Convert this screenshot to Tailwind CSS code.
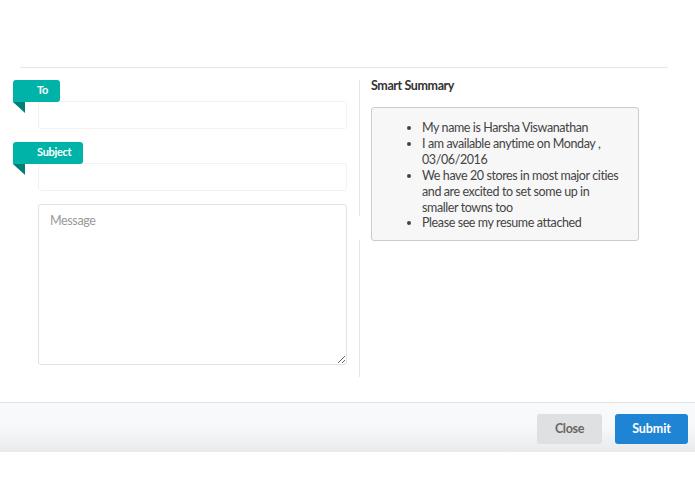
<!DOCTYPE html>
<html lang="en">
<head>
    <meta charset="UTF-8">
    <title>Smart Summary</title>
    <script src="https://cdn.jsdelivr.net/npm/@tailwindcss/browser@4"></script>
</head>
<body class="bg-white h-[494px] overflow-hidden font-['Lato',sans-serif] text-[#333]">
    <div class="pt-[67px] pl-5 pr-[27px]">
        <div class="h-px bg-[#e6e6e6]"></div>
    </div>

    <div class="flex h-[334px] pt-3 pl-[13px]">
        <!-- left: form -->
        <div class="w-[334px] h-[297px]">
            <div class="relative pt-[21px] pl-[25px]">
                <div class="absolute left-0 top-0 w-[47px] h-[22px] bg-[#00b3a8] rounded-r-[3px] rounded-tl-[3px] text-white text-[11px] tracking-[-0.3px] font-bold leading-[20px] pl-[24px]">To</div>
                <div class="absolute left-0 top-[22px] w-0 h-0 border-t-[11px] border-t-[#007f78] border-l-[12px] border-l-transparent"></div>
                <input type="text" class="block w-full h-[28px] border border-[#f2f2f2] rounded-[3px] bg-white">
            </div>
            <div class="relative mt-[13px] pt-[21px] pl-[25px]">
                <div class="absolute left-0 top-0 w-[70px] h-[22px] bg-[#00b3a8] rounded-r-[3px] rounded-tl-[3px] text-white text-[11px] tracking-[-0.3px] font-bold leading-[20px] pl-[24px]">Subject</div>
                <div class="absolute left-0 top-[22px] w-0 h-0 border-t-[11px] border-t-[#007f78] border-l-[12px] border-l-transparent"></div>
                <input type="text" class="block w-full h-[28px] border border-[#f2f2f2] rounded-[3px] bg-white">
            </div>
            <div class="mt-[13px] pl-[25px]">
                <textarea placeholder="Message" class="block w-full h-[161px] border border-[#e2e2e2] rounded-[3px] bg-white pl-[11px] pr-3 py-[7px] text-[12.5px] tracking-[-0.35px] leading-[18px] placeholder:text-[#999] resize-y outline-none"></textarea>
            </div>
        </div>

        <!-- divider -->
        <div class="flex flex-col ml-3 w-px h-[297px]">
            <div class="h-[136px] bg-[#e6e6e6]"></div>
            <div class="h-6"></div>
            <div class="h-[137px] bg-[#e6e6e6]"></div>
        </div>

        <!-- right: summary -->
        <div class="ml-[11px] w-[268px]">
            <h2 class="text-[12.5px] tracking-[-0.4px] font-bold leading-4 mt-[-2px] text-[#333]">Smart Summary</h2>
            <div class="mt-[13px] h-[134px] bg-[#f7f7f7] border border-[#ccc] rounded-[3px] pt-[12px] pl-[50px] pr-4 text-[12.5px] tracking-[-0.4px] leading-[15.9px] text-[#444]">
                <ul class="list-disc">
                    <li>My name is Harsha Viswanathan</li>
                    <li>I am available anytime on Monday , 03/06/2016</li>
                    <li>We have 20 stores in most major cities and are excited to set some up in smaller towns too</li>
                    <li>Please see my resume attached</li>
                </ul>
            </div>
        </div>
    </div>

    <!-- footer -->
    <div class="h-[50px] border-t border-[#e2e4e4] bg-gradient-to-b from-[#f9fafb] via-[#f7f8f9] to-[#e9eaeb] flex items-center justify-end gap-[13px] pr-[7px] pt-[3px]">
        <button class="w-[65px] h-[30px] rounded-[3px] bg-[#dfe0e1] text-[12.5px] tracking-[-0.3px] font-bold text-[#666]">Close</button>
        <button class="w-[73px] h-[30px] rounded-[3px] bg-[#1f84d4] text-[12.5px] tracking-[-0.1px] font-bold text-white">Submit</button>
    </div>
</body>
</html>
